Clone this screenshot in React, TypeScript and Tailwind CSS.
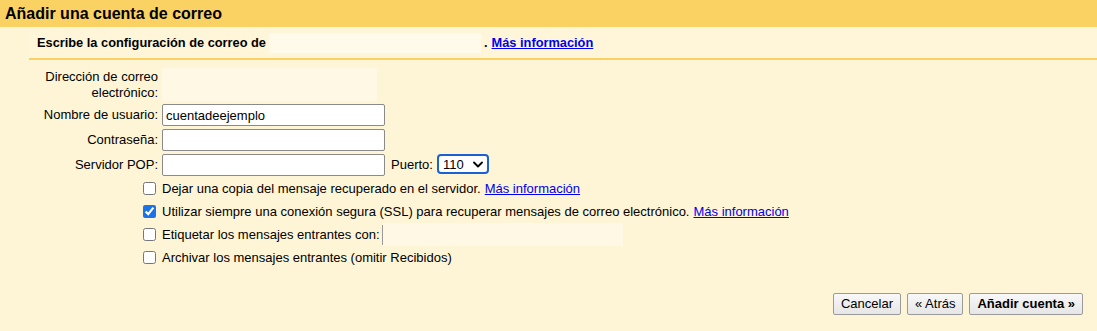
import React from "react";

const font = "font-['Liberation_Sans',Arial,Helvetica,sans-serif]";

const TextField: React.FC<{ value?: string }> = ({ value }) => (
  <input
    type="text"
    defaultValue={value}
    className="h-[22px] w-[223px] rounded-[2px] border border-[#8a8a8a] bg-white px-[3px] text-[13px] text-black outline-none"
  />
);

const CheckRow: React.FC<{ label: string; checked?: boolean; link?: boolean; children?: React.ReactNode }> = ({
  label,
  checked,
  link,
  children,
}) => (
  <label className="flex h-[23px] items-center">
    <input
      type="checkbox"
      defaultChecked={checked}
      className="m-0 mr-[6px] h-[13px] w-[13px] accent-[#1a73e8]"
    />
    <span>{label}</span>
    {link && (
      <a href="#" className="ml-[4px] text-[#0000ee] underline">
        Más información
      </a>
    )}
    {children}
  </label>
);

export default function App() {
  return (
    <div className={`h-[331px] w-[1097px] bg-[#fef4d6] text-[13px] text-black ${font}`}>
      <div className="flex h-[27px] items-center bg-[#fad163] px-[5px] text-[16px] font-bold">
        Añadir una cuenta de correo
      </div>

      <div className="ml-[29px] flex h-[33px] items-center border-b-2 border-[#fad163] bg-[#fff6da] pl-[8px] text-[12.8px] font-bold">
        <span>Escribe la configuración de correo de</span>
        <span className="mx-[3px] h-[20px] w-[212px] bg-[#fffae9]" />
        <span>.</span>
        <a href="#" className="ml-[4px] text-[#0000ee] underline">
          Más información
        </a>
      </div>

      <div className="grid grid-cols-[158px_auto] gap-x-[4px] gap-y-[3px] pt-[8px]">
        <div className="pt-[1px] text-right leading-[16px]">
          Dirección de correo
          <br />
          electrónico:
        </div>
        <div className="h-[33px] w-[215px] bg-[#fff8e4]" />

        <div className="flex h-[22px] items-center justify-end">Nombre de usuario:</div>
        <TextField value="cuentadeejemplo" />

        <div className="flex h-[22px] items-center justify-end">Contraseña:</div>
        <TextField />

        <div className="flex h-[22px] items-center justify-end">Servidor POP:</div>
        <div className="flex items-center">
          <TextField />
          <span className="ml-[6px] mr-[4px]">Puerto:</span>
          <div className="-mt-[2px] flex h-[20px] w-[52px] items-center rounded-[4px] border-2 border-[#1b62d1] bg-white pl-[4px] pr-[4px]">
            <select className="w-full appearance-none bg-transparent text-[13px] leading-none outline-none">
              <option>110</option>
              <option>995</option>
            </select>
            <svg width="10" height="7" viewBox="0 0 10 7" className="shrink-0">
              <path d="M1 1.5 L5 5.5 L9 1.5" fill="none" stroke="#000" strokeWidth="1.8" strokeLinecap="round" strokeLinejoin="round" />
            </svg>
          </div>
        </div>
      </div>

      <div className="mt-[1px] flex flex-col pl-[143px]">
        <CheckRow label="Dejar una copia del mensaje recuperado en el servidor." link />
        <CheckRow
          label="Utilizar siempre una conexión segura (SSL) para recuperar mensajes de correo electrónico."
          checked
          link
        />
        <CheckRow label="Etiquetar los mensajes entrantes con:">
          <span className="ml-[2px] h-[20px] w-px bg-[#9a9a9a]" />
          <span className="h-[23px] w-[240px] bg-[#fff8e4]" />
        </CheckRow>
        <CheckRow label="Archivar los mensajes entrantes (omitir Recibidos)" />
      </div>

      <div className="mt-[24px] flex justify-end gap-[6px] pr-[14px]">
        <button className="h-[22px] rounded-[2px] border border-[#9b9b9b] bg-gradient-to-b from-[#f8f8f8] to-[#e6e6e6] px-[7px] text-[13px]">
          Cancelar
        </button>
        <button className="h-[22px] rounded-[2px] border border-[#9b9b9b] bg-gradient-to-b from-[#f8f8f8] to-[#e6e6e6] px-[7px] text-[13px]">
          « Atrás
        </button>
        <button className="h-[22px] rounded-[2px] border border-[#9b9b9b] bg-gradient-to-b from-[#f8f8f8] to-[#e6e6e6] px-[7px] text-[13px] font-bold">
          Añadir cuenta »
        </button>
      </div>
    </div>
  );
}
